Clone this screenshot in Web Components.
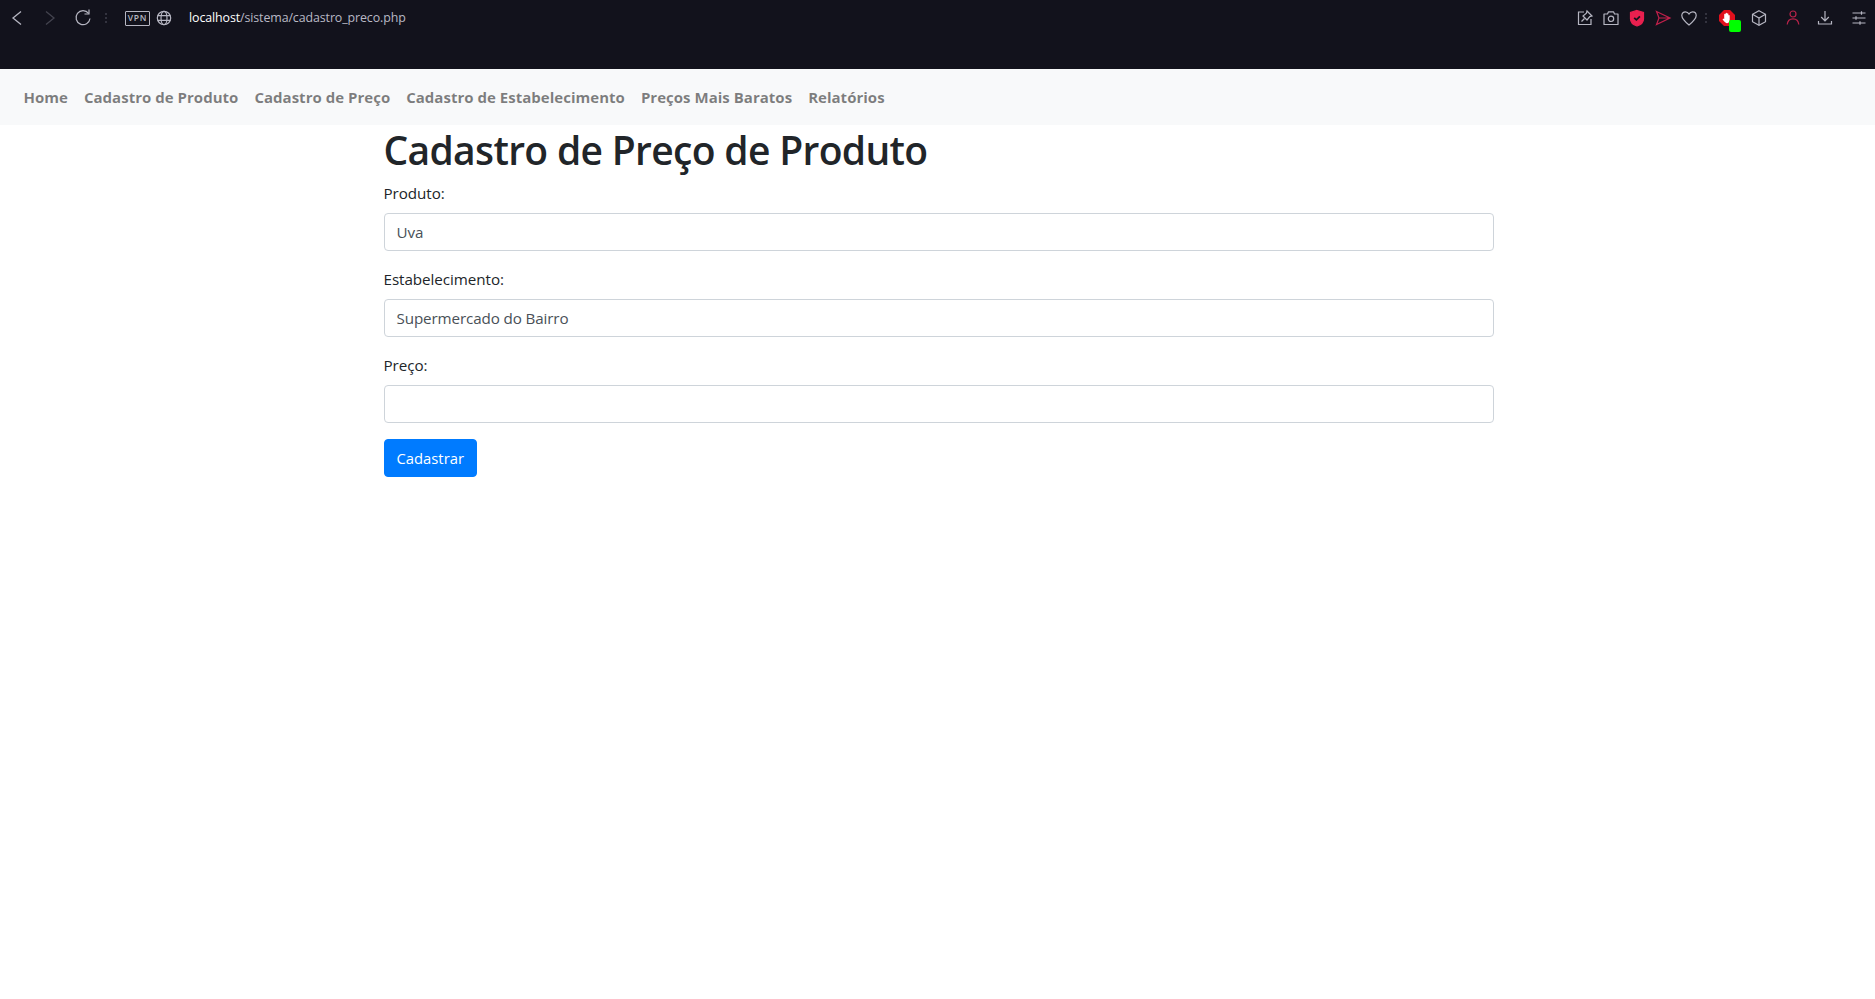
<!DOCTYPE html>
<html lang="pt-BR">
<head>
<meta charset="utf-8">
<title>Cadastro de Preço</title>
<style>
  html, body { margin: 0; background: #fff; }
  body { font-family: "Open Sans", "Liberation Sans", sans-serif; color: #212529; font-size: 15.2px; line-height: 24px; }
</style>
</head>
<body>
<browser-bar url-host="localhost" url-path="/sistema/cadastro_preco.php"></browser-bar>
<site-nav>
  <nav-link>Home</nav-link>
  <nav-link>Cadastro de Produto</nav-link>
  <nav-link>Cadastro de Preço</nav-link>
  <nav-link>Cadastro de Estabelecimento</nav-link>
  <nav-link>Preços Mais Baratos</nav-link>
  <nav-link>Relatórios</nav-link>
</site-nav>
<price-form heading="Cadastro de Preço de Produto">
  <form-field label="Produto:">Uva</form-field>
  <form-field label="Estabelecimento:">Supermercado do Bairro</form-field>
  <form-field label="Preço:"></form-field>
  <primary-button>Cadastrar</primary-button>
</price-form>

<script>
const icons = {
  back: `<path d="M15 3.5 L7 10 L15 16.5" stroke-width="1.3"/>`,
  forward: `<path d="M6 3.5 L14 10 L6 16.5" stroke-width="1.3" opacity=".3"/>`,
  reload: `<path d="M15.6 5.4 A7 7 0 1 0 17 10.5"/><path d="M16 1.5 V6 H11.5"/>`,
  globe: `<circle cx="10" cy="10" r="6.7"/><ellipse cx="10" cy="10" rx="3" ry="6.7"/><path d="M3.6 7.7 H16.4 M3.6 12.3 H16.4"/>`,
  share: `<path d="M9 4 H3.5 V16.5 H16 V11"/><path d="M12 3 L17 8 L14.8 8.6 L12 12 L8 8 L11.4 5.2 Z"/><path d="M9.5 10.5 L6.5 13.5"/>`,
  camera: `<path d="M3 6 H6.5 L7.5 3.8 H12.5 L13.5 6 H17 V16.5 H3 Z" stroke-linejoin="round"/><circle cx="10" cy="10.8" r="2.7"/>`,
  shield: `<path d="M10 2.5 L16.5 4.5 V11 C16.5 14.5 13 17 10 18 C7 17 3.5 14.5 3.5 11 V4.5 Z" fill="#e9204f" stroke="#e9204f"/><path d="M7.2 9.8 L9.4 11.8 L12.9 8.4" stroke="#12121c" stroke-width="1.8"/>`,
  send: `<path d="M3.5 3.5 L17 10 L3.5 16.5 L6 10 Z M6 10 H17" stroke="#c2204b"/>`,
  heart: `<path d="M10 17 C5 13 2.8 10.5 2.8 7.6 C2.8 5.2 4.6 3.8 6.4 3.8 C8 3.8 9.3 4.7 10 6 C10.7 4.7 12 3.8 13.6 3.8 C15.4 3.8 17.2 5.2 17.2 7.6 C17.2 10.5 15 13 10 17 Z"/>`,
  cube: `<path d="M10 2.8 L16.5 6.3 V13.7 L10 17.2 L3.5 13.7 V6.3 Z"/><path d="M3.5 6.3 L10 10 L16.5 6.3 M10 10 V17.2"/>`,
  person: `<circle cx="10" cy="6" r="3" stroke="#b8234a"/><path d="M4.2 16.5 C4.6 12.5 7 10.8 10 10.8 C13 10.8 15.4 12.5 15.8 16.5" stroke="#b8234a"/>`,
  download: `<path d="M10 3 V12.5 M6.2 9 L10 12.8 L13.8 9"/><path d="M3.5 13 V16 H16.5 V13"/>`,
  sliders: `<path d="M3.5 5 H16.5 M3.5 10 H16.5 M3.5 15 H16.5"/><path d="M12.5 3.2 V6.8 M7 8.2 V11.8 M11 13.2 V16.8"/>`
};

class BarIcon extends HTMLElement {
  constructor() {
    super();
    this.attachShadow({ mode: "open" });
    const name = this.getAttribute("name");
    this.shadowRoot.innerHTML = `
      <style>
        :host { display: block; width: 20px; height: 20px; flex: none; color: #b6b6c2; }
        svg { display: block; fill: none; stroke: currentColor; stroke-width: 1.2; }
      </style>
      <svg width="20" height="20" viewBox="0 0 20 20">${icons[name]}</svg>`;
  }
}
customElements.define("bar-icon", BarIcon);

class BarDots extends HTMLElement {
  constructor() {
    super();
    this.attachShadow({ mode: "open" }).innerHTML = `
      <style>
        :host { display: flex; flex-direction: column; gap: 2px; flex: none; }
        i { display: block; width: 2px; height: 2px; background: #33333f; }
      </style>
      <i></i><i></i><i></i>`;
  }
}
customElements.define("bar-dots", BarDots);

class VpnBadge extends HTMLElement {
  constructor() {
    super();
    this.attachShadow({ mode: "open" }).innerHTML = `
      <style>
        :host {
          display: flex; align-items: center; justify-content: center; flex: none;
          box-sizing: border-box; width: 25px; height: 15px;
          border: 1px solid #b6b6c2; border-radius: 1px; color: #b6b6c2;
          font: 600 8.5px/1 "Open Sans", sans-serif; letter-spacing: .8px;
        }
      </style>
      VPN`;
  }
}
customElements.define("vpn-badge", VpnBadge);

class AdblockIcon extends HTMLElement {
  constructor() {
    super();
    this.attachShadow({ mode: "open" }).innerHTML = `
      <style>
        :host { display: block; position: relative; width: 22px; height: 22px; flex: none; margin-top: 6px; }
        svg { display: block; }
        i { position: absolute; left: 10px; top: 10px; width: 12px; height: 12px; border-radius: 2px; background: #00ff00; }
      </style>
      <svg width="16" height="16" viewBox="0 0 16 16">
        <path d="M5 0 H11 L16 5 V11 L11 16 H5 L0 11 V5 Z" fill="#e1101c"/>
        <path d="M5.2 9 V4.6 C5.2 3.4 6.6 3.4 6.6 4.6 V3.6 C6.6 2.5 8 2.5 8 3.6 V4 C8 3 9.4 3 9.4 4 V5.5 C9.4 4.8 10.7 4.8 10.7 5.6 V9.6 C10.7 12 9.5 13.2 7.9 13.2 C6.4 13.2 5.2 11.5 3.8 9.8 C3.3 9 4.3 8.3 5.2 9 Z" fill="#fff"/>
      </svg>
      <i></i>`;
  }
}
customElements.define("adblock-icon", AdblockIcon);

const barTemplate = document.createElement("template");
barTemplate.innerHTML = `
  <style>
    :host {
      display: block; height: 69px; background: #12121c; box-sizing: border-box;
      font-family: "Open Sans", sans-serif;
    }
    .row { display: flex; align-items: center; justify-content: space-between; height: 36px; }
    .left, .right { display: flex; align-items: center; }
    .left { padding-left: 6px; }
    .right { padding-right: 6px; }
    .url { margin-left: 15px; font-size: 12.4px; color: #b9b9c5; white-space: nowrap; letter-spacing: -.1px; }
    .url b { font-weight: 500; color: #fff; }
  </style>
  <div class="row">
    <div class="left">
      <bar-icon name="back"></bar-icon>
      <bar-icon name="forward" style="margin-left:14px"></bar-icon>
      <bar-icon name="reload" style="margin-left:13px"></bar-icon>
      <bar-dots style="margin-left:12px"></bar-dots>
      <vpn-badge style="margin-left:18px"></vpn-badge>
      <bar-icon name="globe" style="margin-left:4px"></bar-icon>
      <span class="url"><b id="host"></b><span id="path"></span></span>
    </div>
    <div class="right">
      <bar-icon name="share"></bar-icon>
      <bar-icon name="camera" style="margin-left:6px"></bar-icon>
      <bar-icon name="shield" style="margin-left:6px"></bar-icon>
      <bar-icon name="send" style="margin-left:6px"></bar-icon>
      <bar-icon name="heart" style="margin-left:6px"></bar-icon>
      <bar-dots style="margin-left:6px"></bar-dots>
      <adblock-icon style="margin-left:12px"></adblock-icon>
      <bar-icon name="cube" style="margin-left:8px"></bar-icon>
      <bar-icon name="person" style="margin-left:14px"></bar-icon>
      <bar-icon name="download" style="margin-left:12px"></bar-icon>
      <bar-icon name="sliders" style="margin-left:14px"></bar-icon>
    </div>
  </div>`;

class BrowserBar extends HTMLElement {
  constructor() {
    super();
    this.attachShadow({ mode: "open" });
    this.shadowRoot.appendChild(barTemplate.content.cloneNode(true));
    this.shadowRoot.getElementById("host").textContent = this.getAttribute("url-host");
    this.shadowRoot.getElementById("path").textContent = this.getAttribute("url-path");
  }
}
customElements.define("browser-bar", BrowserBar);

class SiteNav extends HTMLElement {
  constructor() {
    super();
    this.attachShadow({ mode: "open" }).innerHTML = `
      <style>
        :host { display: flex; align-items: center; box-sizing: border-box; height: 56px; padding: 0 15.5px; background: #f8f9fa; }
      </style>
      <slot></slot>`;
  }
}
customElements.define("site-nav", SiteNav);

class NavLink extends HTMLElement {
  constructor() {
    super();
    this.attachShadow({ mode: "open" }).innerHTML = `
      <style>
        :host { display: block; padding: 8px; color: rgba(0,0,0,.5); font-weight: 700; font-size: 15px; letter-spacing: .02px; white-space: nowrap; }
      </style>
      <slot></slot>`;
  }
}
customElements.define("nav-link", NavLink);

class PriceForm extends HTMLElement {
  constructor() {
    super();
    this.attachShadow({ mode: "open" }).innerHTML = `
      <style>
        :host { display: block; box-sizing: border-box; width: 1140px; margin: 0 auto; padding: 0 15px; position: relative; left: 1px; }
        h1 { margin: 0 0 8px; padding-top: 2px; height: 46px; font-size: 39px; line-height: 46px; font-weight: 600; letter-spacing: -.67px; color: #212529; white-space: nowrap; }
      </style>
      <h1></h1>
      <slot></slot>`;
    this.shadowRoot.querySelector("h1").textContent = this.getAttribute("heading");
  }
}
customElements.define("price-form", PriceForm);

class FormField extends HTMLElement {
  constructor() {
    super();
    this.attachShadow({ mode: "open" }).innerHTML = `
      <style>
        :host { display: block; margin-bottom: 16px; }
        label { display: block; margin-bottom: 8px; height: 24px; letter-spacing: -.05px; }
        .control {
          box-sizing: border-box; height: 38px; padding: 6px 12px; letter-spacing: -.12px;
          border: 1px solid #ced4da; border-radius: 4px; background: #fff; color: #495057;
        }
      </style>
      <label></label>
      <div class="control" role="textbox"><slot></slot></div>`;
    this.shadowRoot.querySelector("label").textContent = this.getAttribute("label");
  }
}
customElements.define("form-field", FormField);

class PrimaryButton extends HTMLElement {
  constructor() {
    super();
    this.attachShadow({ mode: "open" }).innerHTML = `
      <style>
        :host {
          display: inline-block; box-sizing: border-box; height: 38px; padding: 6px 12px;
          border: 1px solid #007bff; border-radius: 4px; background: #007bff; color: #fff; cursor: pointer;
          font-size: 14.8px;
        }
      </style>
      <slot></slot>`;
  }
}
customElements.define("primary-button", PrimaryButton);
</script>
</body>
</html>
